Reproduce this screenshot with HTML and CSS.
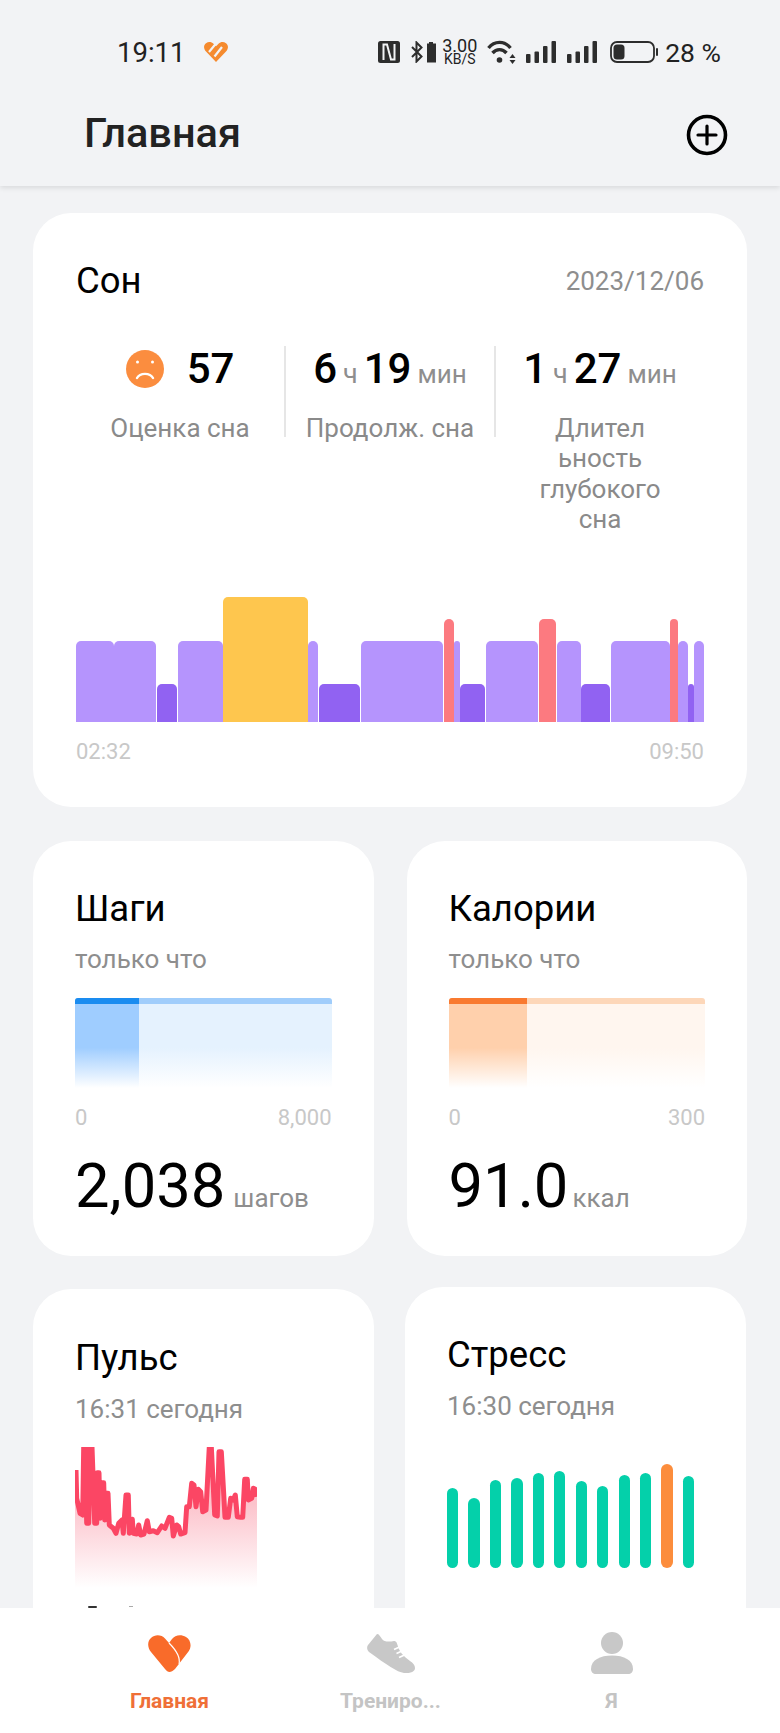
FILE: index.html
```html
<!DOCTYPE html>
<html lang="ru">
<head>
    <meta charset="UTF-8">
    <meta name="viewport" content="width=device-width, initial-scale=1.0">
    <title>Главная</title>
    <link rel="stylesheet" href="styles.css">
</head>
<body>
<div class="app">
    <div class="header">
        <div class="statusbar">
            <span class="clock">19:11</span>
            <svg class="mini-heart" viewBox="0 0 24 20">
                <path d="M12 20 2 9.500C-.7 6.500-.5 3 2 1.200 4.500-.6 7.500-.2 9.500 1.800L12 4.300 14.500 1.800C16.500-.2 19.500-.6 22 1.200 24.500 3 24.700 6.500 22 9.500Z" fill="#f58a2e"/>
                <path d="M5 10 12 1.500M10.500 14.500 18 5" stroke="#f2f3f5" stroke-width="2.200" fill="none"/>
            </svg>
            <div class="status-icons">
                <svg class="ic-nfc" viewBox="0 0 22 22">
                    <rect width="22" height="22" rx="2.500" fill="#2d2d2d"/>
                    <path d="M5.500 19V3.500H9L13 18.500H16.500V3" stroke="#f2f3f5" stroke-width="2" fill="none"/>
                </svg>
                <svg class="ic-bt" viewBox="0 0 25 22">
                    <path d="M1 6 10.500 15.500 5.500 20.500V1.500L10.500 6.500 1 16" stroke="#2d2d2d" stroke-width="2" fill="none"/>
                    <path d="M18 2.500V1H22V2.500H25V21.500H16V2.500Z" fill="#2d2d2d"/>
                </svg>
                <div class="speed"><span>3.00</span><span class="speed-unit">KB/S</span></div>
                <svg class="ic-wifi" viewBox="0 0 29 24">
                    <path d="M1.500 8C7.500 .5 17.500 .5 23.500 8M5.500 13C9.500 8.500 15.500 8.500 19.500 13" stroke="#2d2d2d" stroke-width="3.400" fill="none"/>
                    <circle cx="12.500" cy="20" r="2.800" fill="#2d2d2d"/>
                    <path d="M22.500 18 25.500 14 28.500 18ZM22.500 20H28.500L25.500 24Z" fill="#2d2d2d"/>
                </svg>
                <svg class="ic-signal" viewBox="0 0 30 22">
                    <rect y="13" width="4.500" height="9" rx="1" fill="#2d2d2d"/>
                    <rect x="8.500" y="10.500" width="4.500" height="11.500" rx="1" fill="#2d2d2d"/>
                    <rect x="17" y="5" width="4.500" height="17" rx="1" fill="#2d2d2d"/>
                    <rect x="25.500" width="4.500" height="22" rx="1" fill="#2d2d2d"/>
                </svg>
                <svg class="ic-signal ic-signal2" viewBox="0 0 30 22">
                    <rect y="13" width="4.500" height="9" rx="1" fill="#2d2d2d"/>
                    <rect x="8.500" y="10.500" width="4.500" height="11.500" rx="1" fill="#2d2d2d"/>
                    <rect x="17" y="5" width="4.500" height="17" rx="1" fill="#2d2d2d"/>
                    <rect x="25.500" width="4.500" height="22" rx="1" fill="#2d2d2d"/>
                </svg>
                <svg class="ic-battery" viewBox="0 0 48 22">
                    <rect x="1" y="1" width="43" height="20" rx="6" stroke="#2d2d2d" stroke-width="1.800" fill="none"/>
                    <rect x="3.500" y="3.500" width="11" height="15" rx="3.500" fill="#2d2d2d"/>
                    <rect x="46" y="7" width="2" height="8" rx="1" fill="#2d2d2d"/>
                </svg>
                <span class="percent">28 %</span>
            </div>
        </div>
        <div class="title-row">
            <h1>Главная</h1>
            <svg class="plus" viewBox="0 0 42 42">
                <circle cx="21" cy="21" r="18.500" stroke="#000" stroke-width="3.600" fill="none"/>
                <path d="M12 21H30M21 12V30" stroke="#000" stroke-width="3.200" stroke-linecap="round"/>
            </svg>
        </div>
    </div>

    <div class="content">
        <div class="card sleep">
            <div class="sleep-head">
                <span class="card-title">Сон</span>
                <span class="date">2023/12/06</span>
            </div>
            <div class="stats">
                <div class="stat">
                    <div class="stat-value">
                        <svg class="face" viewBox="0 0 38 38">
                            <circle cx="19" cy="19" r="19" fill="#fb8d3f"/>
                            <circle cx="11.500" cy="12" r="1.500" fill="#fff"/>
                            <circle cx="26.500" cy="12" r="1.500" fill="#fff"/>
                            <path d="M11 28C14 22.500 24 22.500 27 28" stroke="#fff" stroke-width="2.400" fill="none" stroke-linecap="round"/>
                        </svg>
                        <b>57</b>
                    </div>
                    <div class="stat-label">Оценка сна</div>
                </div>
                <div class="sep"></div>
                <div class="stat">
                    <div class="stat-value"><b>6</b><i>ч</i><b>19</b><i>мин</i></div>
                    <div class="stat-label">Продолж. сна</div>
                </div>
                <div class="sep"></div>
                <div class="stat">
                    <div class="stat-value"><b>1</b><i>ч</i><b>27</b><i>мин</i></div>
                    <div class="stat-label">Длител<br>ьность<br>глубокого<br>сна</div>
                </div>
            </div>
            <div class="sleep-chart">
                <div class="seg light" style="width:37.500px"></div>
                <div class="seg light" style="width:42.500px"></div>
                <div class="seg dark" style="width:20.600px"></div>
                <div class="seg light" style="width:44.700px"></div>
                <div class="seg awake" style="width:85px"></div>
                <div class="seg light" style="width:10.100px"></div>
                <div class="seg dark" style="width:41.200px"></div>
                <div class="seg light" style="width:82.900px"></div>
                <div class="seg rem" style="width:9.700px"></div>
                <div class="seg light" style="width:5.900px"></div>
                <div class="seg dark" style="width:25.200px"></div>
                <div class="seg light" style="width:52.500px"></div>
                <div class="seg rem" style="width:17.300px"></div>
                <div class="seg light" style="width:24.200px"></div>
                <div class="seg dark" style="width:29px"></div>
                <div class="seg light" style="width:59.400px"></div>
                <div class="seg rem" style="width:7.300px"></div>
                <div class="seg light" style="width:9.700px"></div>
                <div class="seg dark" style="width:5.600px"></div>
                <div class="seg light" style="width:9.600px"></div>
            </div>
            <div class="axis sleep-axis"><span>02:32</span><span>09:50</span></div>
        </div>

        <div class="row">
            <div class="card small">
                <div class="card-title">Шаги</div>
                <div class="sub">только что</div>
                <div class="goal steps">
                    <div class="goal-done"></div>
                </div>
                <div class="axis"><span>0</span><span>8,000</span></div>
                <div class="total"><span class="big">2,038</span><span class="unit">шагов</span></div>
            </div>
            <div class="card small">
                <div class="card-title">Калории</div>
                <div class="sub">только что</div>
                <div class="goal calories">
                    <div class="goal-done"></div>
                </div>
                <div class="axis"><span>0</span><span>300</span></div>
                <div class="total"><span class="big">91.0</span><span class="unit unit-tight">ккал</span></div>
            </div>
        </div>

        <div class="row row-low">
            <div class="card low pulse">
                <div class="card-title">Пульс</div>
                <div class="sub">16:31 сегодня</div>
                <svg class="pulse-chart" viewBox="0 0 182 141">
                    <defs>
                        <linearGradient id="pulseFill" x1="0" y1="0" x2="0" y2="1">
                            <stop offset="0.4" stop-color="#fcc3cc"/>
                            <stop offset="1" stop-color="#fff"/>
                        </linearGradient>
                    </defs>
                    <polygon fill="url(#pulseFill)" points="1,23 1.700,51.300 5,66.300 7.700,68 8.700,0 10.300,0 11.700,76.300 13.700,76.300 15,0 17,0 19.700,76.300 21.700,76.300 22.300,25.700 24,25.700 25,71.300 26.700,35.700 28.700,35.700 29.700,73 31.700,46.300 33,46.300 34.300,78 38.300,81.300 41,86.300 43.700,76.300 47,73 48.300,86.300 51,48 53.300,48 54.300,86.300 57.300,72.300 58.300,86.300 61.700,87 63.700,78 65.700,88 69,87 72.300,73.700 74.300,84.700 78.300,83.700 82.300,85.700 86.700,79 90,81.300 94.300,70.300 96.700,71.300 98.300,89 101.700,78 103.700,79.700 105.700,87 110,85.700 111.700,59.700 114.300,59.700 116.700,36.300 119,38 121,59.700 123.300,42.300 125.700,44.700 127.700,64.700 131,63 134.300,0 136.300,0 139.700,68 142.300,69 144,4.700 146.300,4.700 148.300,39.700 150,70.300 153.300,70.300 155.700,51.300 158.300,53 160.300,48 162.300,69.700 165.700,70.300 167.700,70.300 169.700,32.300 172.300,32.300 173.300,53 176.700,51.300 178.300,41.300 180.300,42.300 182,49.700 182,141 0,141 0,23"/>
                    <polyline class="pulse-line" points="1,23 1.700,51.300 5,66.300 7.700,68 8.700,0 10.300,0 11.700,76.300 13.700,76.300 15,0 17,0 19.700,76.300 21.700,76.300 22.300,25.700 24,25.700 25,71.300 26.700,35.700 28.700,35.700 29.700,73 31.700,46.300 33,46.300 34.300,78 38.300,81.300 41,86.300 43.700,76.300 47,73 48.300,86.300 51,48 53.300,48 54.300,86.300 57.300,72.300 58.300,86.300 61.700,87 63.700,78 65.700,88 69,87 72.300,73.700 74.300,84.700 78.300,83.700 82.300,85.700 86.700,79 90,81.300 94.300,70.300 96.700,71.300 98.300,89 101.700,78 103.700,79.700 105.700,87 110,85.700 111.700,59.700 114.300,59.700 116.700,36.300 119,38 121,59.700 123.300,42.300 125.700,44.700 127.700,64.700 131,63 134.300,0 136.300,0 139.700,68 142.300,69 144,4.700 146.300,4.700 148.300,39.700 150,70.300 153.300,70.300 155.700,51.300 158.300,53 160.300,48 162.300,69.700 165.700,70.300 167.700,70.300 169.700,32.300 172.300,32.300 173.300,53 176.700,51.300 178.300,41.300 180.300,42.300 182,49.700"/>
                </svg>
                <div class="peek"><span class="peek-a"></span><span class="peek-b"></span></div>
            </div>
            <div class="card low stress">
                <div class="card-title">Стресс</div>
                <div class="sub">16:30 сегодня</div>
                <div class="stress-bars">
                    <div class="stress-bar" style="height:80px"></div>
                    <div class="stress-bar" style="height:70px"></div>
                    <div class="stress-bar" style="height:88.300px"></div>
                    <div class="stress-bar" style="height:90px"></div>
                    <div class="stress-bar" style="height:95px"></div>
                    <div class="stress-bar" style="height:96.700px"></div>
                    <div class="stress-bar" style="height:86.700px"></div>
                    <div class="stress-bar" style="height:81.700px"></div>
                    <div class="stress-bar" style="height:93.300px"></div>
                    <div class="stress-bar" style="height:95px"></div>
                    <div class="stress-bar high" style="height:104px"></div>
                    <div class="stress-bar" style="height:91.700px"></div>
                </div>
            </div>
        </div>
    </div>

    <div class="nav">
        <div class="nav-item active">
            <div class="nav-icon">
                <svg class="nav-heart" viewBox="0 0 43 37">
                    <path d="M21.500 37C20 37 18.500 36 17 34L3 17C-1 12-.5 6 3 3 7-1 13.500-.5 17 3.500L21 8 24 4C27 0 33-1 38 2 43 5 44 12 40.500 16.500L27 34C25 36 23 37 21.500 37Z" fill="#f96b2a"/>
                    <path d="M21 8C27 14 33 21 31 29" stroke="#fff" stroke-width="1.200" fill="none"/>
                </svg>
            </div>
            <span>Главная</span>
        </div>
        <div class="nav-item">
            <div class="nav-icon">
                <svg class="nav-shoe" viewBox="0 0 48 39">
                    <path d="M10 0C12 0 13 2 15 5 17 8 22 8 27 7 29 6.500 30 9 30.500 11 32 17 36 22 43 27 47 29.500 49 33 47.500 36 46 38.500 42 39.500 37 39 30 38 20 31 2 18 0 16-.5 13 1 11Z" fill="#c8c8c8"/>
                    <path d="M27 15.500 32.500 13M29.500 19.500 35 17M32 23.500 37.500 21" stroke="#fff" stroke-width="1.700" fill="none"/>
                </svg>
            </div>
            <span>Трениро...</span>
        </div>
        <div class="nav-item">
            <div class="nav-icon">
                <svg class="nav-person" viewBox="0 0 42 42">
                    <circle cx="21" cy="11" r="11" fill="#c8c8c8"/>
                    <path d="M0 37C0 28 9 23.500 21 23.500 33 23.500 42 28 42 37 42 40 40 42 37 42H5C2 42 0 40 0 37Z" fill="#c8c8c8"/>
                </svg>
            </div>
            <span>Я</span>
        </div>
    </div>
</div>
</body>
</html>
```

FILE: styles.css
```css
body {
    margin: 0;
    font-family: Roboto, "Noto Sans", sans-serif;
    background-color: #f2f3f5;
}
.app {
    width: 780px;
    height: 1733px;
    display: flex;
    flex-direction: column;
    overflow: hidden;
}

/* top */
.header {
    position: relative;
    z-index: 2;
    flex: none;
    height: 186px;
    background-color: #f2f3f5;
    box-shadow: 0 2px 5px rgba(0, 0, 0, 0.1);
}
.statusbar {
    display: flex;
    align-items: center;
    height: 36px;
    padding: 34px 59px 0 117px;
    color: #222;
}
.clock {
    font-size: 27.500px;
}
.mini-heart {
    width: 24px;
    height: 20px;
    margin-left: 19px;
}
.status-icons {
    display: flex;
    align-items: center;
    margin-left: auto;
}
.ic-nfc {
    width: 22px;
    height: 22px;
}
.ic-bt {
    width: 25px;
    height: 22px;
    margin-left: 11px;
}
.speed {
    display: flex;
    flex-direction: column;
    align-items: center;
    width: 37px;
    margin-left: 5px;
    font-size: 18px;
    line-height: 14px;
}
.speed-unit {
    font-size: 14px;
    line-height: 12px;
}
.ic-wifi {
    width: 29px;
    height: 24px;
    margin-left: 9px;
}
.ic-signal {
    width: 30px;
    height: 22px;
    margin-left: 10px;
}
.ic-signal2 {
    margin-left: 11px;
}
.ic-battery {
    width: 48px;
    height: 22px;
    margin-left: 13px;
}
.percent {
    margin-left: 7px;
    font-size: 26.500px;
}
.title-row {
    display: flex;
    align-items: center;
    justify-content: space-between;
    height: 116px;
    padding: 8px 52px 0 84px;
    box-sizing: border-box;
}
h1 {
    margin: 0;
    font-size: 41.500px;
    font-weight: 500;
    color: #222;
}
.plus {
    width: 42px;
    height: 42px;
    margin-top: 6px;
}

/* cards */
.content {
    flex: 1;
    min-height: 0;
    overflow: hidden;
    padding: 27px 33px 0;
}
.card {
    background-color: #fff;
    border-radius: 38px;
    box-sizing: border-box;
}
.card-title {
    font-size: 36.500px;
    line-height: 44px;
    color: #000;
}
.sub {
    font-size: 26px;
    line-height: 30px;
    color: #8e8e8e;
}
.axis {
    display: flex;
    justify-content: space-between;
    font-size: 22px;
    line-height: 26px;
    color: #c8c8c8;
}

/* sleep */
.sleep {
    height: 594px;
    padding: 46px 43px 0;
}
.sleep-head {
    display: flex;
    justify-content: space-between;
    align-items: center;
}
.date {
    font-size: 26px;
    color: #8e8e8e;
}
.stats {
    display: flex;
    align-items: flex-start;
    height: 250px;
    margin-top: 43px;
}
.stat {
    flex: 1;
    text-align: center;
}
.sep {
    flex: none;
    width: 2px;
    height: 91px;
    background-color: #e6e6e6;
}
.stat-value {
    display: flex;
    justify-content: center;
    align-items: baseline;
    height: 46px;
    line-height: 46px;
    color: #000;
}
.stat-value b {
    font-size: 42px;
    font-weight: 500;
}
.stat-value i {
    margin: 0 6px;
    font-size: 27px;
    font-style: normal;
    color: #8e8e8e;
}
.stat-value i:last-child {
    margin-right: 0;
    font-size: 26px;
}
.face {
    width: 38px;
    height: 38px;
    margin-right: 23px;
    align-self: center;
}
.stat-label {
    margin-top: 21px;
    font-size: 26px;
    line-height: 30.300px;
    color: #8a8a8a;
}
.sleep-chart {
    display: flex;
    align-items: flex-end;
    gap: 0.430px;
    height: 126px;
}
.seg {
    flex: none;
    border-radius: 5px 5px 0 0;
}
.light {
    height: 81.500px;
    background-color: #b594fd;
}
.dark {
    height: 38px;
    background-color: #9162f2;
}
.awake {
    height: 125.500px;
    background-color: #fec64e;
}
.rem {
    height: 103.500px;
    background-color: #fc7a80;
}
.sleep-axis {
    margin-top: 17px;
}

/* steps, calories */
.row {
    display: flex;
    gap: 33px;
    margin-top: 34px;
}
.small {
    flex: 1;
    height: 415px;
    padding: 46px 42px 0;
}
.small .sub {
    margin-top: 13px;
}
.goal {
    position: relative;
    height: 84px;
    margin-top: 24px;
    border-top: 6px solid;
    border-radius: 3px 3px 0 0;
}
.steps {
    border-top-color: #a0cdfb;
    background: linear-gradient(#e5f2fe 52%, #fff);
}
.calories {
    border-top-color: #fdd7b9;
    background: linear-gradient(#fff6ef 52%, #fff);
}
.goal-done {
    position: absolute;
    left: 0;
    top: -6px;
    bottom: 0;
    border-top: 6px solid;
    border-radius: 3px 0 0 0;
}
.steps .goal-done {
    width: 25%;
    border-top-color: #1a8cf0;
    background: linear-gradient(#9fcdff 52%, #fff);
}
.calories .goal-done {
    width: 30.500%;
    border-top-color: #f97a30;
    background: linear-gradient(#ffd0ac 52%, #fff);
}
.small .axis {
    margin-top: 17px;
}
.total {
    display: flex;
    align-items: baseline;
    margin-top: 19px;
    line-height: 72px;
}
.big {
    font-size: 61.500px;
    color: #000;
}
.unit {
    margin-left: 8px;
    font-size: 26px;
    color: #8e8e8e;
}
.unit-tight {
    margin-left: 4px;
}

/* pulse, stress */
.row-low {
    gap: 31px;
    margin-top: 33px;
    padding-right: 1px;
    align-items: flex-start;
}
.low {
    flex: 1;
    height: 420px;
}
.pulse {
    padding: 47px 42px 0;
}
.pulse .sub {
    margin-top: 14px;
}
.pulse-chart {
    display: block;
    width: 182px;
    height: 141px;
    margin-top: 23px;
    overflow: hidden;
}
.pulse-line {
    fill: none;
    stroke: #fb4664;
    stroke-width: 5;
    stroke-linejoin: round;
}
.peek {
    display: flex;
    margin-top: 18px;
    padding-left: 13px;
    gap: 32px;
    align-items: flex-start;
}
.peek-a {
    width: 9px;
    height: 2px;
    border-radius: 2px;
    background-color: #333;
}
.peek-b {
    width: 4px;
    height: 1px;
    background-color: #aaa;
}
.stress {
    margin-top: -2px;
    padding: 46px 42px 0;
}
.stress .sub {
    margin-top: 14px;
}
.stress-bars {
    display: flex;
    align-items: flex-end;
    gap: 10.150px;
    height: 104px;
    margin-top: 43px;
}
.stress-bar {
    flex: none;
    width: 11.300px;
    border-radius: 6px;
    background-color: #04d0aa;
}
.stress-bar.high {
    background-color: #fc8d3c;
}

/* bottom */
.nav {
    position: relative;
    z-index: 2;
    flex: none;
    display: grid;
    grid-template-columns: repeat(3, 221px);
    height: 125px;
    padding: 0 59px;
    box-sizing: border-box;
    background-color: #fff;
}
.nav-item {
    display: flex;
    flex-direction: column;
    align-items: center;
    font-size: 21px;
    font-weight: 700;
    color: #c4c4c4;
}
.nav-icon {
    height: 67px;
}
.nav-item span {
    margin-top: 13px;
    line-height: 26px;
}
.nav-item.active {
    color: #ef6f37;
}
.nav-icon svg {
    display: block;
}
.nav-heart {
    width: 43px;
    height: 37px;
    margin-top: 27px;
}
.nav-shoe {
    width: 48px;
    height: 39px;
    margin-top: 26px;
}
.nav-person {
    width: 42px;
    height: 42px;
    margin-top: 24px;
}
```
